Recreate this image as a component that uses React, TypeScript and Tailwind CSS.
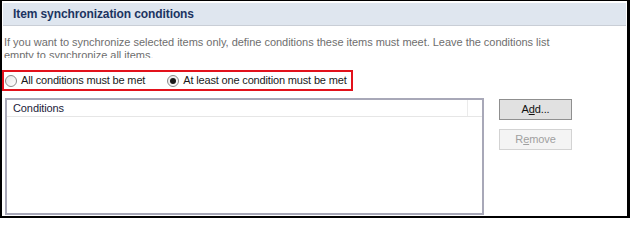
import React from "react";

function Radio({ checked }: { checked?: boolean }) {
  return (
    <span className="flex h-[12px] w-[12px] shrink-0 items-center justify-center rounded-full border border-[#8a8a8a] bg-gradient-to-br from-[#e6e6e6] to-[#ffffff]">
      {checked ? <span className="h-[6px] w-[6px] rounded-full bg-[#1a1a1a]" /> : null}
    </span>
  );
}

export default function App() {
  return (
    <div className="h-[218px] w-[630px] overflow-hidden border-t border-l-2 border-r-[3px] border-b-2 border-black bg-white font-['Liberation_Sans',Arial,sans-serif] text-[11px] tracking-[-0.1px]">
      <div className="mx-[1px] mt-[2px] flex h-[23px] items-center border-b border-[#c9ced6] bg-[#dfe6ef] pl-[10px] text-[12px] font-bold tracking-[-0.1px] text-[#1c3461]">
        Item synchronization conditions
      </div>
      <div className="mt-[10px] h-[22px] overflow-hidden pl-[2px] leading-[13px] tracking-[-0.03px] text-[#6e6e6e]">
        <div className="whitespace-nowrap">
          If you want to synchronize selected items only, define conditions these items must meet. Leave the conditions list
        </div>
        <div className="whitespace-nowrap">empty to synchronize all items.</div>
      </div>
      <div className="mt-[12px] flex h-[21px] w-[351px] items-center border-2 border-[#e2111b] pl-[1px] tracking-[-0.16px] text-[#1a1a1a]">
        <Radio />
        <span className="ml-[4px]">All conditions must be met</span>
        <span className="ml-[22px]">
          <Radio checked />
        </span>
        <span className="ml-[4px]">At least one condition must be met</span>
      </div>
      <div className="mt-[7px] flex items-start">
        <div className="ml-[3px] h-[117px] w-[479px] border-2 border-[#a8a8b8] bg-white">
          <div className="flex h-[17px] border-b border-[#e6e6e6]">
            <div className="flex w-[461px] items-center border-r border-[#ebebeb] pl-[6px] text-[#1b1b3a]">
              Conditions
            </div>
          </div>
        </div>
        <div className="ml-[15px] mt-[1px] flex flex-col gap-[9px]">
          <button className="flex h-[21px] w-[73px] items-center justify-center border border-[#8f8f8f] bg-[#e1e1e1] text-[#111]">
            A<span className="underline">d</span>d...
          </button>
          <button className="flex h-[21px] w-[73px] items-center justify-center border border-[#d3d3d3] bg-[#f4f4f4] text-[#a0a0a0]">
            R<span className="underline">e</span>move
          </button>
        </div>
      </div>
    </div>
  );
}
